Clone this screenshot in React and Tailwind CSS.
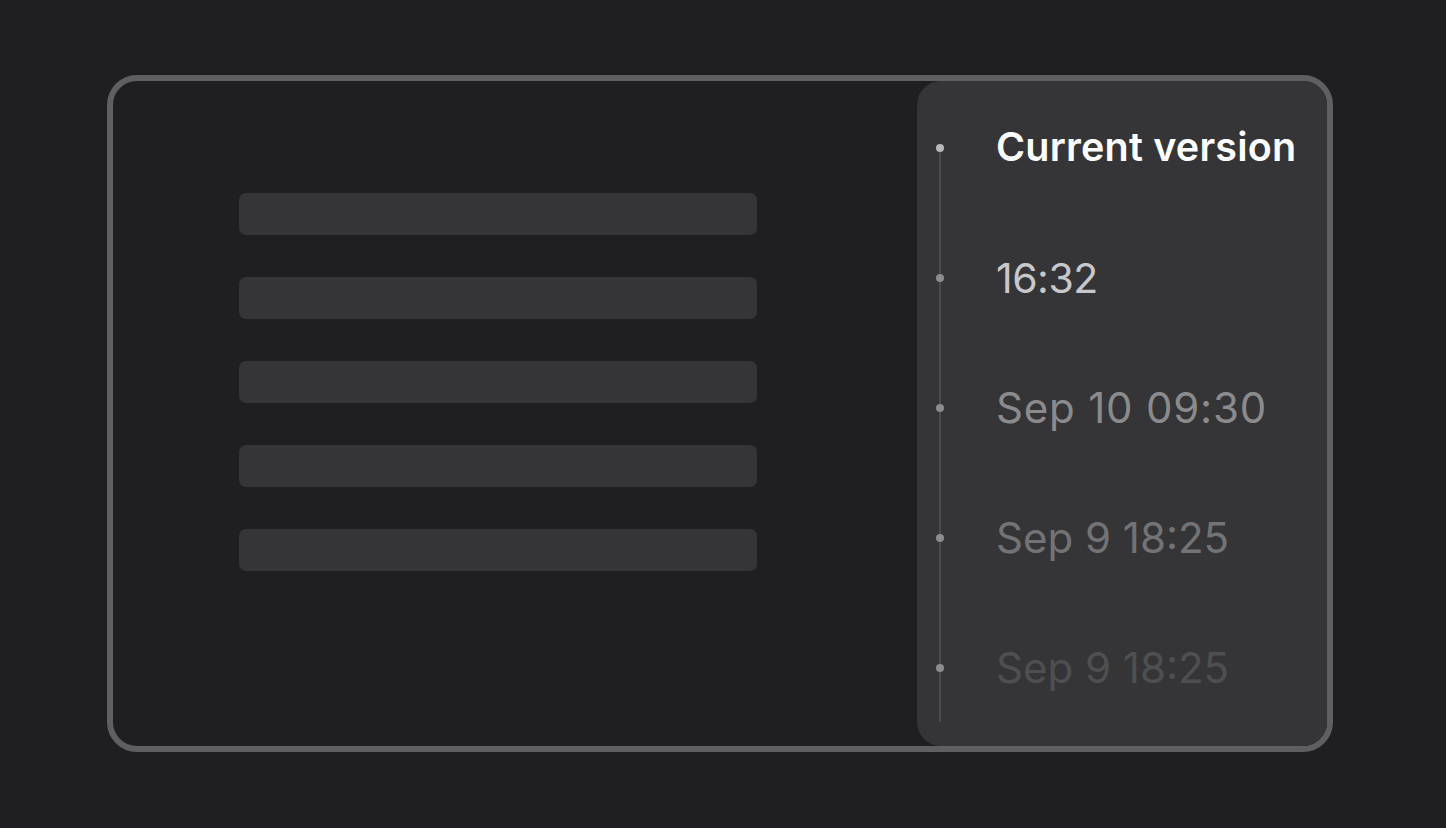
import React from "react";

const items = [
  { label: "Current version", text: "text-white font-semibold text-[39.5px] tracking-[0.2px]", dot: "bg-[#b8b8ba]" },
  { label: "16:32", text: "text-[#c8c8ca] text-[41px] tracking-[-0.5px]", dot: "bg-[#8c8c8e]" },
  { label: "Sep 10 09:30", text: "text-[#8b8b8d] text-[42px] tracking-[0.8px]", dot: "bg-[#8c8c8e]" },
  { label: "Sep 9 18:25", text: "text-[#737375] text-[42px]", dot: "bg-[#8c8c8e]" },
  { label: "Sep 9 18:25", text: "text-[#4f4f51] text-[42px]", dot: "bg-[#8c8c8e]" },
];

export default function App() {
  return (
    <div className="w-[1446px] h-[828px] bg-[#1f1f21] flex items-start pt-[75px] pl-[107px] font-['Inter',sans-serif]">
      <div className="w-[1226px] h-[677px] border-[6px] border-[#5f5f61] rounded-[30px] overflow-hidden flex">
        <div className="flex-1 pt-[112px] pl-[126px] flex flex-col gap-[42px]">
          {[0, 1, 2, 3, 4].map((i) => (
            <div key={i} className="w-[518px] h-[42px] rounded-[7px] bg-[#353537]" />
          ))}
        </div>
        <div className="relative w-[410px] h-full bg-[#353537] rounded-l-[24px] pt-[2px]">
          <div className="absolute left-[22px] top-[67px] h-[574px] w-[2px] bg-[#4b4b4d]" />
          {items.map((it, i) => (
            <div key={i} className="relative h-[130px] flex items-center">
              <div className="w-[46px] flex justify-center">
                <div className={`w-[8px] h-[8px] rounded-full ${it.dot}`} />
              </div>
              <div className={`pl-[33px] leading-none whitespace-nowrap ${it.text}`}>{it.label}</div>
            </div>
          ))}
        </div>
      </div>
    </div>
  );
}
